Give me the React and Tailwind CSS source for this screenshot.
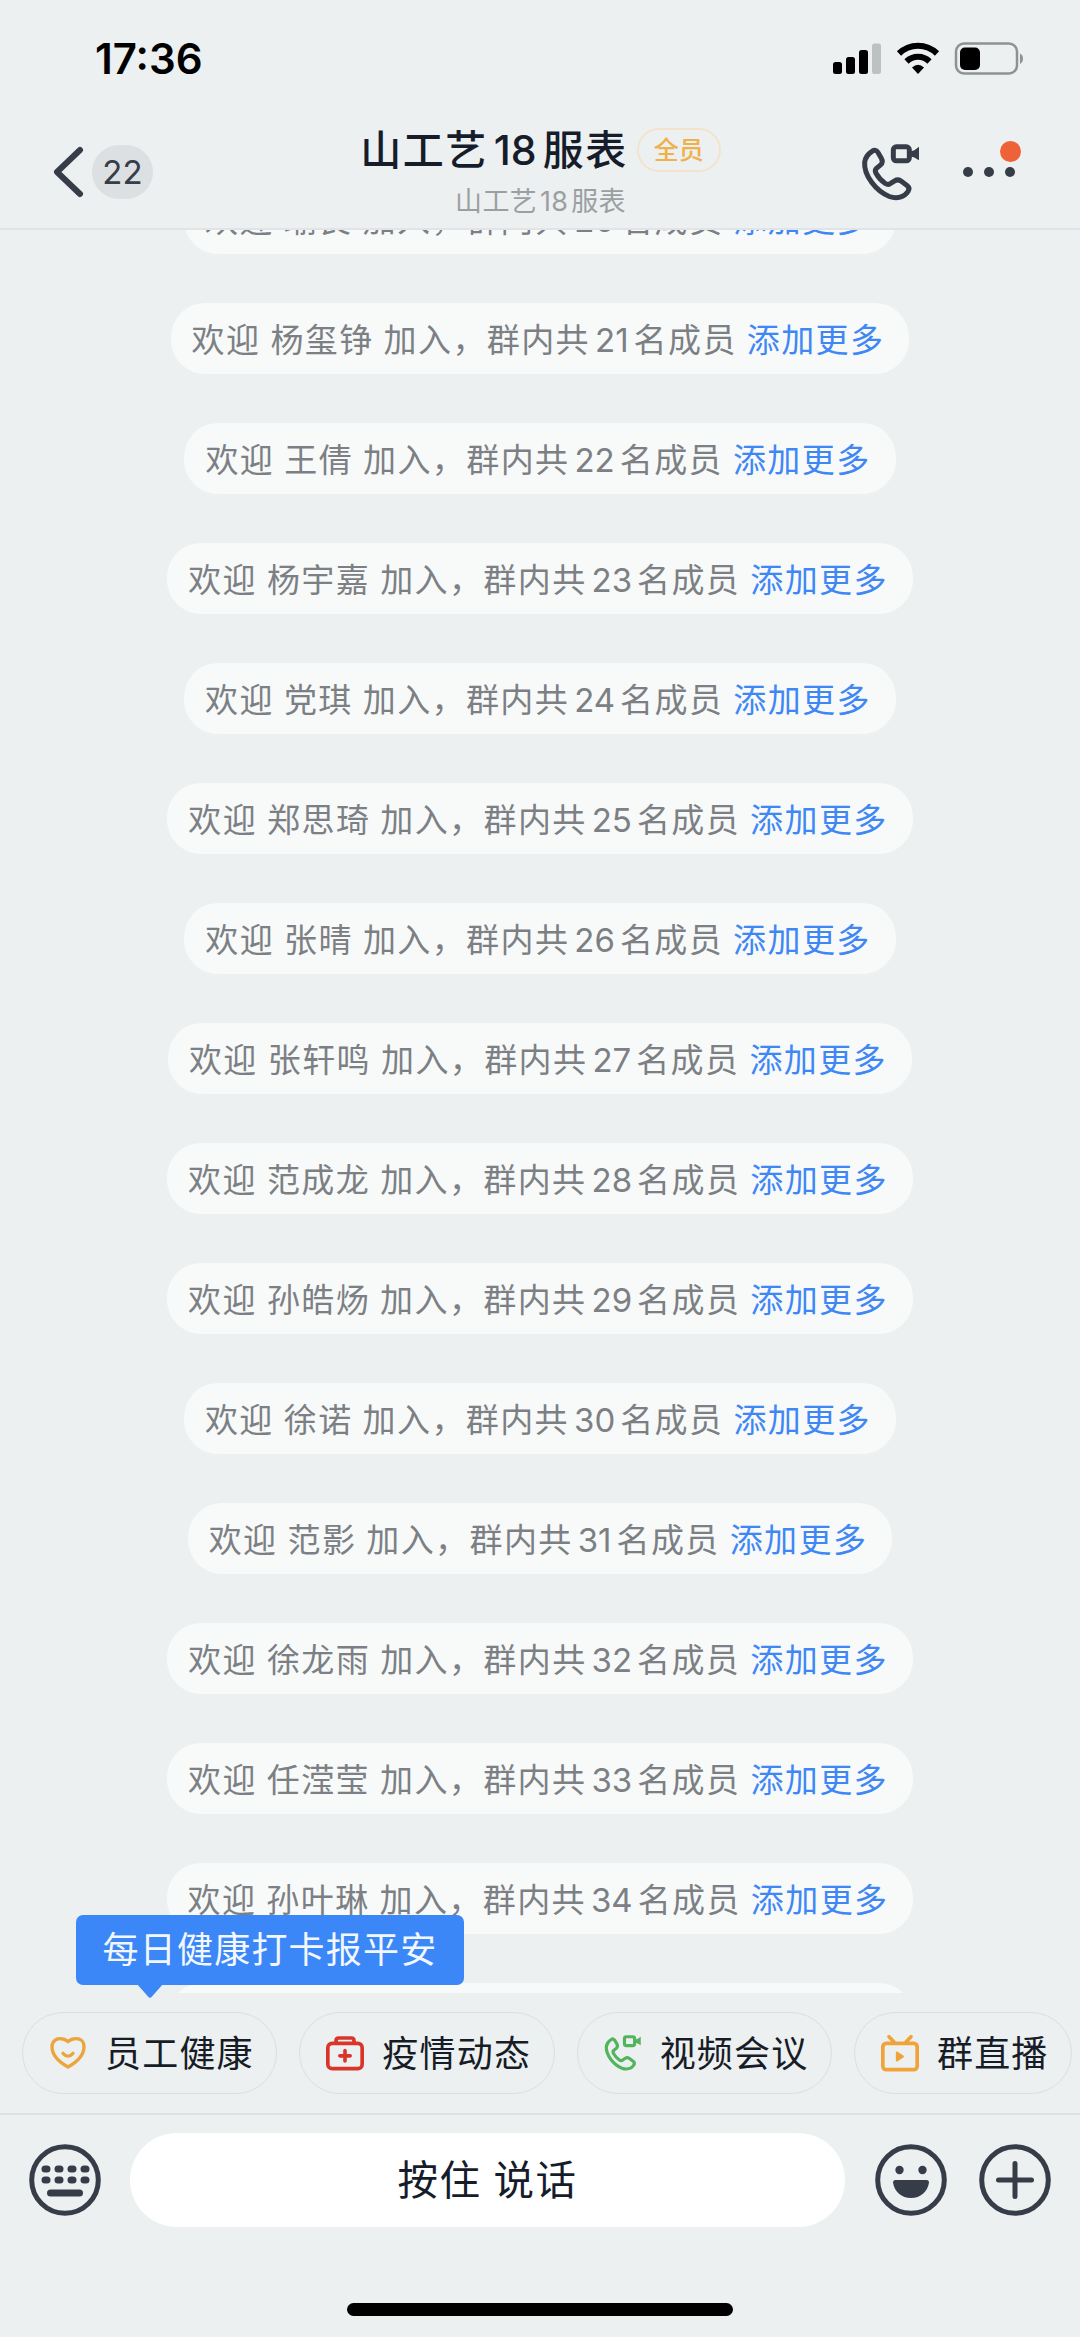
import React from 'react';

const members = [
  { name: '瑜良', count: 20 },
  { name: '杨玺铮', count: 21 },
  { name: '王倩', count: 22 },
  { name: '杨宇嘉', count: 23 },
  { name: '党琪', count: 24 },
  { name: '郑思琦', count: 25 },
  { name: '张晴', count: 26 },
  { name: '张轩鸣', count: 27 },
  { name: '范成龙', count: 28 },
  { name: '孙皓炀', count: 29 },
  { name: '徐诺', count: 30 },
  { name: '范影', count: 31 },
  { name: '徐龙雨', count: 32 },
  { name: '任滢莹', count: 33 },
  { name: '孙叶琳', count: 34 },
];

const VideoCallIcon = ({ className }) => (
  <svg viewBox="30 38 180 176" className={className} fill="none" stroke="currentColor" strokeWidth="15" strokeLinejoin="round">
    <path d="M64 62Q74 55 81 66L91 83Q98 95 88 104L77 113Q70 119 75 128Q85 146 103 159Q112 165 120 158L131 151Q140 145 149 151L168 165Q178 173 171 183C160 200 138 206 115 198C75 182 38 135 41 95Q44 75 64 62Z" />
    <rect x="127" y="49" width="48" height="42" rx="9" />
    <path d="M180 62L190 59L204 49V89L190 81L180 78Z" fill="currentColor" stroke="none" />
  </svg>
);

const HeartIcon = ({ className }) => (
  <svg viewBox="24 26 114 114" className={className} fill="none" stroke="currentColor" strokeWidth="10" strokeLinecap="round" strokeLinejoin="round">
    <path d="M81 125C60 113 33 92 33 64C33 48 45 40 56 40C68 40 75 43 81 49C87 43 94 40 106 40C118 40 129 48 129 64C129 92 102 113 81 125Z" />
    <path d="M66 84Q81 101 96 84" />
  </svg>
);

const MedicalIcon = ({ className }) => (
  <svg viewBox="858 26 114 114" className={className} fill="none" stroke="currentColor" strokeWidth="11" strokeLinecap="round" strokeLinejoin="round">
    <rect x="863.500" y="54" width="103" height="76" rx="13" />
    <path d="M888 53V46Q888 38 896 38H934Q942 38 942 46V53" />
    <path d="M915 76V107M899.500 91.500H930.500" />
  </svg>
);

const LiveIcon = ({ className }) => (
  <svg viewBox="858 26 114 114" className={className} fill="none" stroke="currentColor" strokeWidth="11" strokeLinecap="round" strokeLinejoin="round">
    <rect x="863.500" y="54" width="103" height="79" rx="10" />
    <path d="M882 34L897 50M948 34L933 50" />
    <path d="M906 82L923 93.500L906 105Z" fill="currentColor" strokeWidth="7" />
  </svg>
);

const shortcuts = [
  { label: '员工健康', icon: HeartIcon, color: 'text-[#eba53c]' },
  { label: '疫情动态', icon: MedicalIcon, color: 'text-[#d9362b]' },
  { label: '视频会议', icon: VideoCallIcon, color: 'text-[#52b45c]' },
  { label: '群直播', icon: LiveIcon, color: 'text-[#f0a33a]' },
];

const StatusBar = () => (
  <div className="h-[118px] shrink-0 flex items-start justify-between pl-[95px] pr-[57px]">
    <span className="mt-[34px] text-[42px] leading-[50px] font-semibold text-black">17:36</span>
    <svg viewBox="0 0 192 34" className="mt-[42px] w-[192px] h-[34px]">
      <rect x="2" y="20" width="9" height="12" rx="2.500" />
      <rect x="15" y="15" width="9" height="17" rx="2.500" />
      <rect x="28" y="8" width="9" height="24" rx="2.500" />
      <rect x="41" y="1.500" width="9" height="30.500" rx="2.500" fill="#bdc1c2" />
      <g fill="none" stroke="#000" strokeWidth="6">
        <path d="M68 11.500A27 27 0 0 1 106 11.500" />
        <path d="M75.500 19.500A16.500 16.500 0 0 1 98.500 19.500" />
      </g>
      <path d="M81 25.500Q87 20 93 25.500L87 32Z" />
      <rect x="125" y="1.500" width="61" height="30" rx="8" fill="none" stroke="#8e9293" strokeWidth="2.500" />
      <rect x="129" y="5.500" width="20" height="22.500" rx="5" />
      <path d="M189 11.500Q192 13 192 16.500T189 22Z" fill="#8e9293" />
    </svg>
  </div>
);

const Header = () => (
  <header className="h-[112px] shrink-0 grid grid-cols-[1fr_auto_1fr] border-b-2 border-[#e0e4e6]">
    <div className="flex items-center self-start mt-[27px] ml-[52px] gap-2">
      <svg viewBox="0 0 32 54" className="w-8 h-[54px]" fill="none" stroke="#363d49" strokeWidth="6" strokeLinecap="round" strokeLinejoin="round">
        <path d="M28 5L5 27L28 49" />
      </svg>
      <span className="w-[61px] h-[54px] rounded-full bg-[#dce0e3] text-[#363d49] text-[33px] leading-[54px] text-center">22</span>
    </div>
    <div className="flex flex-col items-center pl-px">
      <div className="flex items-center h-[64px]">
        <h1 className="flex items-center text-[41px] leading-[66px] font-medium text-[#171c2b] tracking-[1.500px] whitespace-nowrap">
          山工艺<span className="mx-[6px] tracking-normal">18</span>服表
        </h1>
        <span className="ml-[9px] w-[84px] h-11 rounded-full border-2 border-[#f3e3cd] text-[#f0b04a] text-[25px] leading-[40px] font-medium text-center">全员</span>
      </div>
      <p className="-mt-[2px] text-[27px] leading-[44px] tracking-[0.300px] text-[#9b9fa2] whitespace-nowrap">
        山工艺<span className="mx-[3px]">18</span>服表
      </p>
    </div>
    <div className="flex items-start justify-end pr-[65px]">
      <VideoCallIcon className="w-[60px] h-[59px] mt-[25px] mr-[42px] text-[#363d49]" />
      <div className="relative flex items-center gap-[11px] mt-[49px]">
        <i className="w-[10px] h-[10px] rounded-full bg-[#363d49]" />
        <i className="w-[10px] h-[10px] rounded-full bg-[#363d49]" />
        <i className="w-[10px] h-[10px] rounded-full bg-[#363d49]" />
        <b className="absolute -top-[26px] -right-[6px] w-[21px] h-[21px] rounded-full bg-[#ee6237]" />
      </div>
    </div>
  </header>
);

const Notice = ({ name, count }) => (
  <div className="flex items-center h-[71px] shrink-0 pt-[5px] pl-[21px] pr-[25px] rounded-[34px] bg-[#f8faf9] text-[33px] tracking-[1.400px] text-[#7c8085] whitespace-nowrap">
    <span>欢迎</span>
    <span className="ml-[10px]">{name}</span>
    <span className="ml-[10px]">加入，群内共</span>
    <span className="mx-[5px] tracking-normal">{count}</span>
    <span>名成员</span>
    <a className="ml-[10px] text-[#3f87f5]">添加更多</a>
  </div>
);

const Shortcuts = () => (
  <div className="relative h-[122px] shrink-0 pt-[19px] pl-[22px] flex items-start gap-[22px] border-b-2 border-[#dee2e4]">
    {shortcuts.map(({ label, icon: Icon, color }) => (
      <button key={label} className="shrink-0 h-[82px] rounded-full border-[1.500px] border-[#dbdfe1] flex items-center pl-[26px] pr-[22.500px] text-[36px] tracking-[1.200px] text-[#171c26] whitespace-nowrap">
        <Icon className={`w-[38px] h-[38px] mr-[18px] ${color}`} />
        <span className="pt-[2px]">{label}</span>
      </button>
    ))}
    <div className="absolute left-[76px] -top-[78px] w-[388px] h-[70px] rounded-[7px] bg-[#3b87f7] text-[#f2f7ff] text-[36px] leading-[70px] tracking-[1.200px] text-center whitespace-nowrap">
      每日健康打卡报平安
      <svg viewBox="0 0 26 14" className="absolute left-[61px] top-[69px] w-[26px] h-[14px]" fill="#3b87f7">
        <path d="M0 0H26L15 12.500Q13 15 11 12.500Z" />
      </svg>
    </div>
  </div>
);

const InputBar = () => (
  <div className="flex items-center shrink-0 pt-[18px] pl-[29px] pr-[29px] text-[#363d49]">
    <svg viewBox="0 0 72 72" className="w-[72px] h-[72px]" fill="currentColor">
      <circle cx="36" cy="36" r="33.300" fill="none" stroke="currentColor" strokeWidth="5" />
      {[25, 36].map((y) =>
        [17, 30, 43, 56].map((x) => <rect key={`${x}-${y}`} x={x - 4.5} y={y - 3.5} width="9" height="7" rx="3.500" />)
      )}
      <rect x="18" y="45.500" width="36" height="7" rx="3.500" />
    </svg>
    <button className="ml-[29px] pt-[2px] w-[715px] h-[94px] rounded-full bg-white text-[40.500px] tracking-[1.500px] text-[#171c2b] flex items-center justify-center gap-[12px]">
      <span>按住</span>
      <span>说话</span>
    </button>
    <svg viewBox="0 0 72 72" className="ml-[30px] w-[72px] h-[72px]" fill="currentColor">
      <circle cx="36" cy="36" r="33.300" fill="none" stroke="currentColor" strokeWidth="5" />
      <circle cx="24.500" cy="26" r="4.200" />
      <circle cx="47.500" cy="26" r="4.200" />
      <path d="M20 36H52Q54 36 54 38.500C52.500 48 45.500 54 36 54C26.500 54 19.500 48 18 38.500Q18 36 20 36Z" />
    </svg>
    <svg viewBox="0 0 72 72" className="ml-8 w-[72px] h-[72px]" fill="none" stroke="currentColor" strokeWidth="5" strokeLinecap="round">
      <circle cx="36" cy="36" r="33.300" />
      <path d="M36 19.500V52.500M19.500 36H52.500" />
    </svg>
  </div>
);

const App = () => {
  return (
    <div lang="zh-CN" className="w-[1080px] h-[2337px] flex flex-col overflow-hidden bg-[#ecf0f1] font-['Inter','Noto_Sans_CJK_SC',sans-serif]">
      <StatusBar />
      <Header />
      <main className="h-[1763px] shrink-0 overflow-hidden">
        <div className="-mt-[47px] flex flex-col items-center gap-[49px]">
          {members.map((m) => (
            <Notice key={m.count} {...m} />
          ))}
          {/* next notice, scrolled almost out of view */}
          <div className="w-[745px] h-[71px] shrink-0 rounded-[34px] bg-[#f8faf9]" />
        </div>
      </main>
      <Shortcuts />
      <InputBar />
      <div className="mt-[76px] mx-auto w-[386px] h-[13px] shrink-0 rounded-full bg-black" />
    </div>
  );
};

export default App;
